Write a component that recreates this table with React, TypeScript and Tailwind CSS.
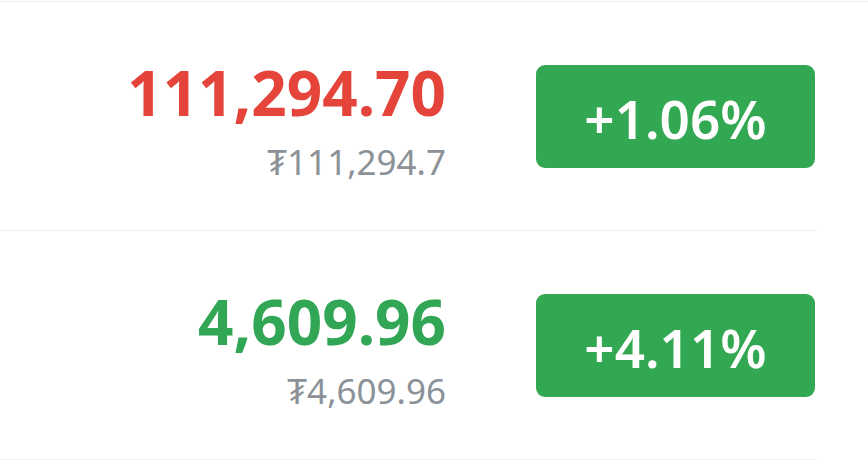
import React from "react";

const rows = [
  { price: "111,294.70", sub: "₮111,294.7", change: "+1.06%", color: "text-[#e4443a]" },
  { price: "4,609.96", sub: "₮4,609.96", change: "+4.11%", color: "text-[#31a655]" },
];

export default function App() {
  return (
    <div className="w-[868px] h-[472px] bg-white overflow-hidden">
      <div className="mt-px border-t border-[#efefef]">
        {rows.map((r) => (
          <div
            key={r.price}
            className="w-[817px] h-[229px] border-b border-[#efefef] flex items-center justify-end pr-[2px]"
          >
            <div className="flex flex-col items-end mt-[8px]">
              <div
                className={`${r.color} font-bold text-[62px] leading-none`}
                style={{ fontFamily: '"Noto Sans", sans-serif' }}
              >
                {r.price}
              </div>
              <div
                className="text-[#8b9196] text-[35px] leading-none mt-[21px]"
                style={{ fontFamily: '"Noto Sans", sans-serif' }}
              >
                {r.sub}
              </div>
            </div>
            <div
              className="ml-[90px] w-[279px] h-[103px] rounded-[9px] bg-[#33a852] flex items-center justify-center text-white text-[53px] font-semibold leading-none pt-[4px]"
              style={{ fontFamily: '"Noto Sans", sans-serif' }}
            >
              {r.change}
            </div>
          </div>
        ))}
      </div>
    </div>
  );
}
